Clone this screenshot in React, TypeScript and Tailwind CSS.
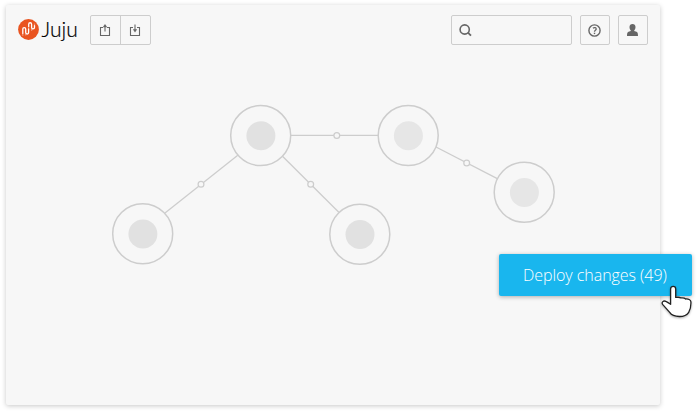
const nodes = [
  { x: 260.7, y: 135.6, fill: '#e1e1e1' },
  { x: 408.2, y: 135.6, fill: '#e6e6e6' },
  { x: 524.2, y: 192.2, fill: '#e6e6e6' },
  { x: 142.7, y: 233.7, fill: '#e1e1e1' },
  { x: 359.8, y: 234.3, fill: '#e1e1e1' },
];

const links = [
  { x1: 290.7, y1: 135.4, x2: 378.2, y2: 135.4, x: 336.8, y: 135.4 },
  { x1: 436, y1: 147, x2: 497.3, y2: 178.6, x: 466.7, y: 163 },
  { x1: 237.8, y1: 155.2, x2: 165, y2: 213, x: 201, y: 184.2 },
  { x1: 282.5, y1: 156.2, x2: 338.8, y2: 212.2, x: 310.7, y: 184.2 },
];

function Logo() {
  return (
    <div className="flex h-[30px] w-[72px] items-start">
      <svg className="mt-[3.5px] size-[21px] shrink-0" viewBox="0 0 21 21" fill="none">
        <circle cx="10.5" cy="10.5" r="10.4" fill="#e95420" />
        <g stroke="#fff" strokeWidth="1.3" strokeLinecap="round">
          <path d="M4.8 14.6V10a1.45 1.45 0 0 1 2.9 0v3.600a1.45 1.45 0 0 0 2.9 0V9.8" />
          <path d="M10.7 7.4V5.2a1.45 1.45 0 0 1 2.9 0v3.2a1.45 1.45 0 0 0 2.9 0V6.6" />
        </g>
        <path d="M4.8 15.6v1M7.7 15.4v.8M10.6 8.6v.6M13.6 10.6v.8M16.5 4.8v.8" stroke="#fff" strokeOpacity=".7" strokeWidth="1.2" />
      </svg>
      <span className="-mt-px ml-[2.5px] font-['Lato',sans-serif] text-[21px] leading-[30px] font-light text-black [-webkit-text-stroke:0.2px_black]">
        Juju
      </span>
    </div>
  );
}

function TransferIcon({ down = false }: { down?: boolean }) {
  return (
    <svg className="mr-px h-[13px] w-3" viewBox="0 0 12 13" fill="none" stroke="#666">
      <path d="M4 3.500H1.500v8h9v-8H8" strokeWidth="1.1" />
      <path d={down ? 'M6 .5v6' : 'M6 2.5v5'} strokeWidth="1.1" />
      <path d={down ? 'M3.8 5.2h4.4L6 8.6z' : 'M3.8 3.2h4.4L6 0z'} fill="#666" stroke="none" />
    </svg>
  );
}

function Header() {
  const box = 'flex h-[30px] items-center rounded-[2px] border border-[#cdcdcd]';
  return (
    <header className="flex h-[50px] items-center pr-3 pl-3">
      <Logo />
      <div className={`${box} w-[61px]`}>
        <button className="flex h-full w-[30px] items-center justify-center border-r border-[#cdcdcd]">
          <TransferIcon />
        </button>
        <button className="flex h-full flex-1 items-center justify-center">
          <TransferIcon down />
        </button>
      </div>
      <div className={`${box} ml-auto w-[121px] pl-[7px]`}>
        <svg className="size-[13px]" viewBox="0 0 13 13" fill="none" stroke="#666" strokeWidth="1.6">
          <circle cx="5.7" cy="5.5" r="4.6" />
          <path d="m8.9 8.7 3.1 3" strokeWidth="1.8" />
        </svg>
      </div>
      <button className={`${box} ml-2 w-[30px] justify-center`}>
        <svg className="mr-px size-[13px]" viewBox="0 0 13 13" fill="none" stroke="#666">
          <circle cx="6.5" cy="6.5" r="5.6" strokeWidth="1.4" />
          <path d="M4.9 4.1c1.8-1 3.4-.3 3.3 1C8.1 6.2 6.500 6.400 6.500 7.700" strokeWidth="1.3" />
          <path d="M6.5 8.700v1.400" strokeWidth="1.4" />
        </svg>
      </button>
      <button className={`${box} ml-2 w-[30px] justify-center`}>
        <svg className="mr-px h-3 w-[11px]" viewBox="0 0 11 12" fill="#666">
          <path d="M5.5 0C3.700 0 2.500 1.200 2.500 3c0 1.500.5 2.800 1.300 3.500v.6L1.500 7.800C.4 8.300 0 9.200 0 12h11c0-2.800-.4-3.700-1.500-4.200L7.200 7.100v-.6c.8-.7 1.300-2 1.300-3.500C8.500 1.200 7.300 0 5.500 0Z" />
        </svg>
      </button>
    </header>
  );
}

function Diagram() {
  return (
    <svg className="block h-[350px] w-[654px]" viewBox="6 55 654 350">
      <g stroke="#cdcdcd" fill="#f7f7f7">
        {links.map((l) => (
          <g key={l.x} strokeWidth="1.25">
            <path d={`M${l.x1} ${l.y1}L${l.x2} ${l.y2}`} />
            <circle cx={l.x} cy={l.y} r="2.9" />
          </g>
        ))}
        {nodes.map((n) => (
          <g key={n.x}>
            <circle cx={n.x} cy={n.y} r="30" strokeWidth="1.5" />
            <circle cx={n.x + 0.2} cy={n.y + 0.2} r="14.5" fill={n.fill} stroke="none" />
          </g>
        ))}
      </g>
    </svg>
  );
}

export default function App() {
  return (
    <div className="relative h-[412px] w-[698px] overflow-hidden bg-white pt-[5px] pl-[6px]">
      <main className="h-[400px] w-[654px] rounded-[2px] bg-[#f7f7f7] shadow-[0_1px_5px_rgba(0,0,0,0.22)]">
        <Header />
        <Diagram />
      </main>
      <button className="absolute top-[254px] left-[499px] flex h-[42px] w-[193px] items-center rounded-[2px] bg-[#19b6ee] pl-6 font-['Open_Sans','Noto_Sans',sans-serif] text-[16px] font-light tracking-[-0.05px] whitespace-nowrap text-white shadow-[0_1px_4px_rgba(0,0,0,0.3)]">
        Deploy changes (49)
      </button>
      <svg className="absolute top-[284px] left-[661px] h-9 w-8 drop-shadow-[0_1px_1px_rgba(0,0,0,0.3)]" viewBox="0 0 32 36">
        <path
          d="M9.600 20.300V4.900c0-3.300 5.100-3.300 5.100 0v8.500c2.300-.3 4-.4 5.200.5 1.900-.2 3.800.1 4.800 1.100 2.400-.3 5.100.7 5.200 2.800.2 4.800-.5 7.900-2.200 10.500-1.800 2.800-4.400 4.200-9.300 4.200-4.300 0-7.600-.9-9.700-4.100L1.600 20.400c-1.400-2.100.9-4.300 3.300-3 1.700.8 2.900 1.600 4.700 2.900Z"
          fill="#fff"
          stroke="#222"
          strokeWidth="1.3"
          strokeLinejoin="round"
        />
      </svg>
    </div>
  );
}
